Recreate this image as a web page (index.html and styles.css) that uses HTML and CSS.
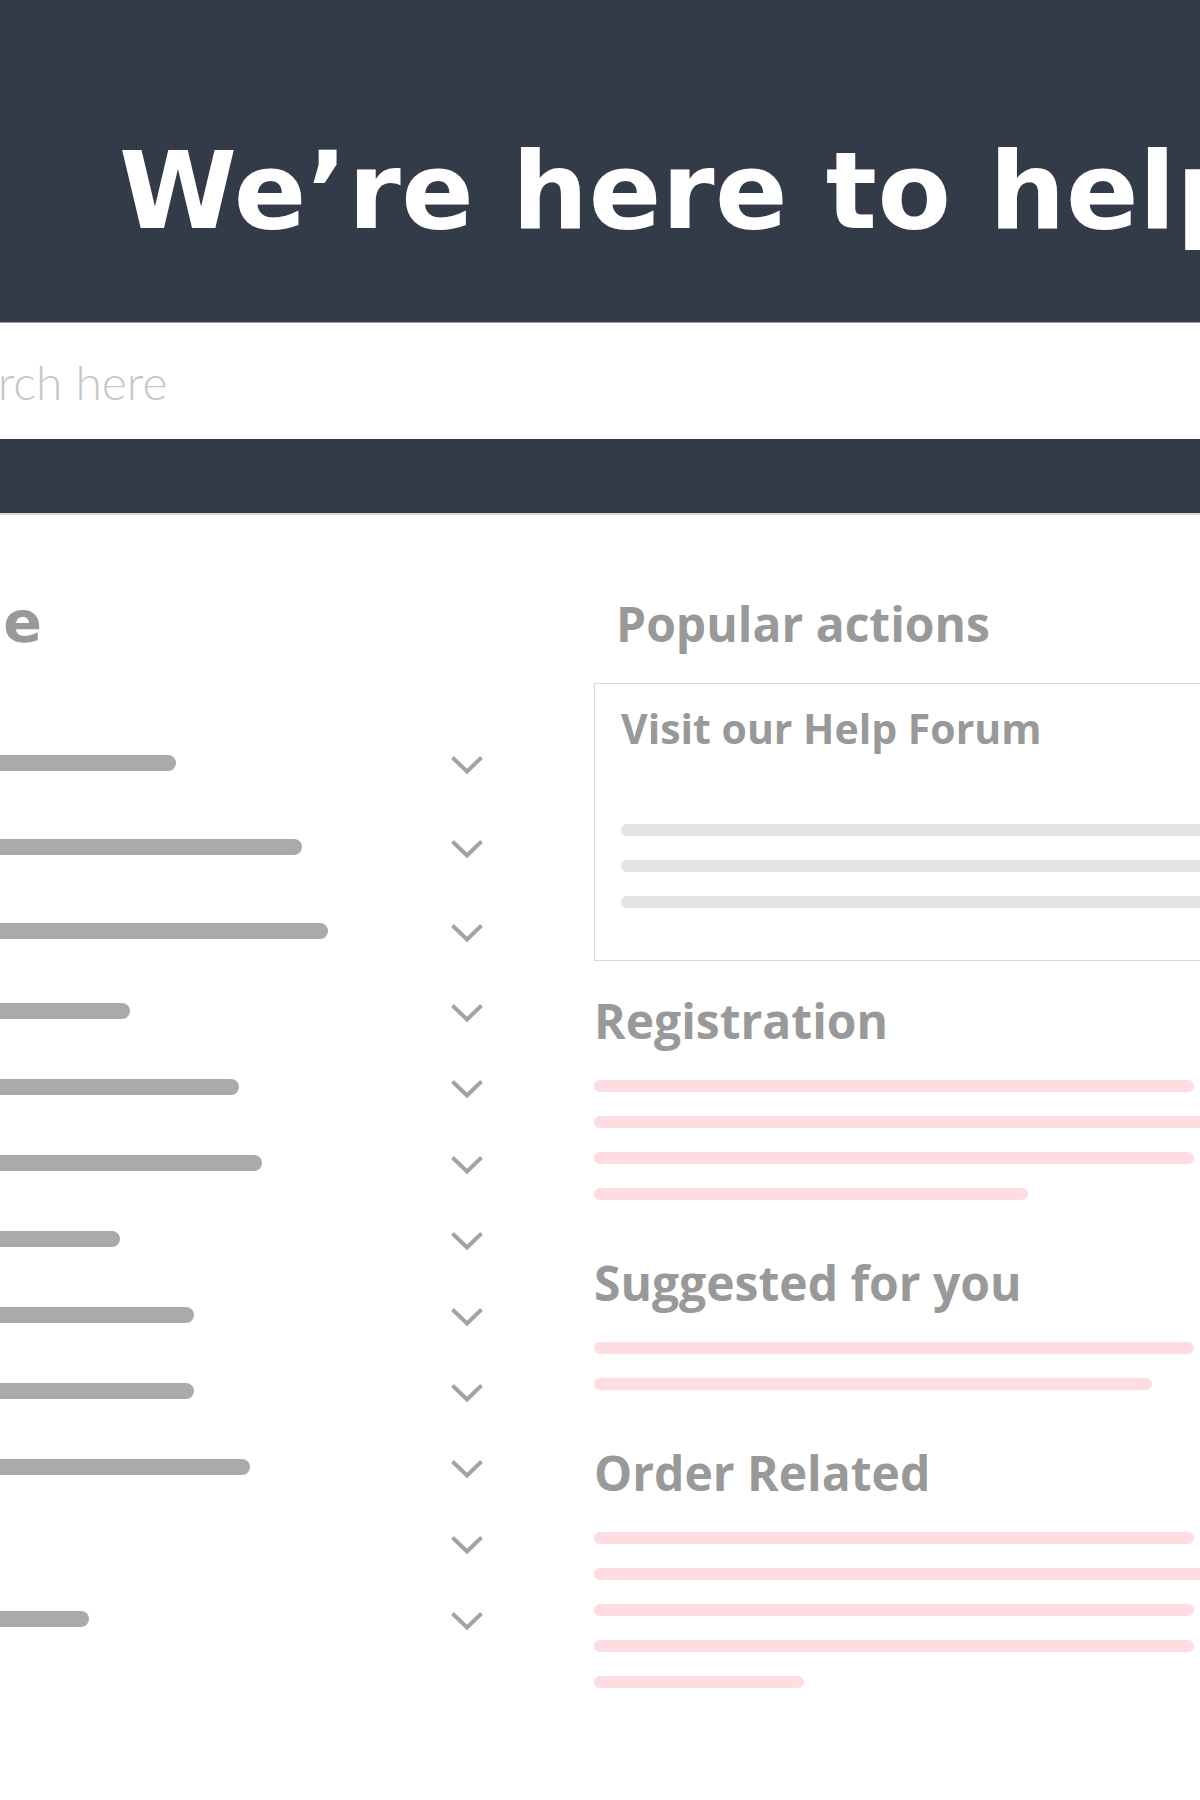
FILE: index.html
```html
<!DOCTYPE html>
<html lang="en">
<head>
  <meta charset="UTF-8" />
  <title>Help Centre</title>
  <link rel="stylesheet" href="styles.css">
</head>
<body>

<!-- top banner -->
<header class="hero">
  <h1>We’re here to help</h1>
</header>

<div class="search">
  <input type="text" class="searchInput" placeholder="Search here" />
</div>
<div class="heroStrip"></div>

<main class="content">

  <!-- topic list (accordion rows) -->
  <section class="topics">
    <h2 class="topicsTitle">Help Centre</h2>
    <ul class="topicList">
      <li class="topic"><span class="topicBar" style="width: 676px"></span><svg class="chevron" viewBox="0 0 32 18"><polyline points="1.5,1.5 16,15.5 30.5,1.5" /></svg></li>
      <li class="topic"><span class="topicBar" style="width: 802px"></span><svg class="chevron" viewBox="0 0 32 18"><polyline points="1.5,1.5 16,15.5 30.5,1.5" /></svg></li>
      <li class="topic"><span class="topicBar" style="width: 828px"></span><svg class="chevron" viewBox="0 0 32 18"><polyline points="1.5,1.5 16,15.5 30.5,1.5" /></svg></li>
      <li class="topic"><span class="topicBar" style="width: 630px"></span><svg class="chevron" viewBox="0 0 32 18"><polyline points="1.5,1.5 16,15.5 30.5,1.5" /></svg></li>
      <li class="topic"><span class="topicBar" style="width: 739px"></span><svg class="chevron" viewBox="0 0 32 18"><polyline points="1.5,1.5 16,15.5 30.5,1.5" /></svg></li>
      <li class="topic"><span class="topicBar" style="width: 762px"></span><svg class="chevron" viewBox="0 0 32 18"><polyline points="1.5,1.5 16,15.5 30.5,1.5" /></svg></li>
      <li class="topic"><span class="topicBar" style="width: 620px"></span><svg class="chevron" viewBox="0 0 32 18"><polyline points="1.5,1.5 16,15.5 30.5,1.5" /></svg></li>
      <li class="topic"><span class="topicBar" style="width: 694px"></span><svg class="chevron" viewBox="0 0 32 18"><polyline points="1.5,1.5 16,15.5 30.5,1.5" /></svg></li>
      <li class="topic"><span class="topicBar" style="width: 694px"></span><svg class="chevron" viewBox="0 0 32 18"><polyline points="1.5,1.5 16,15.5 30.5,1.5" /></svg></li>
      <li class="topic"><span class="topicBar" style="width: 750px"></span><svg class="chevron" viewBox="0 0 32 18"><polyline points="1.5,1.5 16,15.5 30.5,1.5" /></svg></li>
      <li class="topic"><span class="topicBar empty"></span><svg class="chevron" viewBox="0 0 32 18"><polyline points="1.5,1.5 16,15.5 30.5,1.5" /></svg></li>
      <li class="topic"><span class="topicBar" style="width: 589px"></span><svg class="chevron" viewBox="0 0 32 18"><polyline points="1.5,1.5 16,15.5 30.5,1.5" /></svg></li>
    </ul>
  </section>

  <!-- right column -->
  <aside class="side">
    <h2 class="sideTitle popular">Popular actions</h2>

    <div class="card">
      <h3 class="cardTitle">Visit our Help Forum</h3>
      <div class="cardLines">
        <span class="line grey"></span>
        <span class="line grey"></span>
        <span class="line grey"></span>
      </div>
    </div>

    <div class="group">
      <h2 class="sideTitle">Registration</h2>
      <div class="lines">
        <span class="line pink" style="width: 600px"></span>
        <span class="line pink" style="width: 640px"></span>
        <span class="line pink" style="width: 600px"></span>
        <span class="line pink" style="width: 434px"></span>
      </div>
    </div>

    <div class="group">
      <h2 class="sideTitle">Suggested for you</h2>
      <div class="lines">
        <span class="line pink" style="width: 600px"></span>
        <span class="line pink" style="width: 558px"></span>
      </div>
    </div>

    <div class="group">
      <h2 class="sideTitle">Order Related</h2>
      <div class="lines">
        <span class="line pink" style="width: 600px"></span>
        <span class="line pink" style="width: 640px"></span>
        <span class="line pink" style="width: 600px"></span>
        <span class="line pink" style="width: 600px"></span>
        <span class="line pink" style="width: 210px"></span>
      </div>
    </div>
  </aside>

</main>

</body>
</html>
```

FILE: styles.css
```css
html, body {
  margin: 0;
  padding: 0;
  width: 1200px;
  overflow: hidden;
  background: #fff;
  font-family: "Open Sans", "Liberation Sans", sans-serif;
}

/* ---------- banner ---------- */

.hero {
  height: 322px;
  box-sizing: border-box;
  padding: 138px 0 0 119px;
  background: #333a48;
  white-space: nowrap;
}

.hero h1 {
  margin: 0;
  font-family: "DejaVu Sans", sans-serif;
  font-weight: 700;
  font-size: 107px;
  line-height: 1;
  color: #fff;
  letter-spacing: 0.5px;
}

.search {
  height: 117px;
  border-top: 1px solid #9aa0a8;
  box-sizing: border-box;
  background: #fff;
  overflow: hidden;
}

.searchInput {
  display: block;
  margin-left: -76px;
  width: calc(100% + 76px);
  height: 116px;
  padding: 0;
  border: none;
  outline: none;
  font-family: "Lato", sans-serif;
  font-weight: 300;
  font-size: 48px;
  color: #555;
  background: transparent;
}

.searchInput::placeholder {
  color: #c6c6c6;
}

.heroStrip {
  height: 74px;
  background: #333a48;
  border-bottom: 2px solid #d4d7dc;
}

/* ---------- main ---------- */

.content {
  display: flex;
  margin-left: -500px;
  gap: 111px;
}

.topics {
  width: 983px;
  flex-shrink: 0;
}

/* only the last letter of this title shows at the page edge */
.topicsTitle {
  margin: 79px 0 0 0;
  padding-right: 431px;
  text-align: right;
  white-space: nowrap;
  font-family: "DejaVu Sans", sans-serif;
  font-weight: 700;
  font-size: 57px;
  line-height: 1;
  letter-spacing: 10px;
  color: #999;
}

.topicList {
  list-style: none;
  margin: 0;
  padding: 0;
  margin-top: 70px;
}

.topic {
  display: flex;
  align-items: center;
  justify-content: space-between;
  height: 76px;
}

.topic:nth-child(-n+3) {
  height: 84px;
}

.topicBar {
  display: block;
  height: 16px;
  border-radius: 8px;
  background: #aaa;
}

.topicBar.empty {
  width: 0;
}

.chevron {
  width: 32px;
  height: 18px;
  margin-top: 4px;
  fill: none;
  stroke: #a3a3a3;
  stroke-width: 4;
}

.side {
  width: 660px;
  flex-shrink: 0;
}

.sideTitle {
  margin: 0;
  font-weight: 700;
  font-size: 48px;
  line-height: 1;
  color: #999;
}

.sideTitle.popular {
  margin-top: 85px;
  padding-left: 22px;
}

.card {
  margin-top: 35px;
  height: 278px;
  box-sizing: border-box;
  padding: 24px 0 0 26px;
  border: 1.5px solid #dadada;
}

.cardTitle {
  margin: 0;
  font-weight: 700;
  font-size: 41px;
  line-height: 1;
  color: #999;
}

.cardLines {
  margin-top: 75px;
  display: flex;
  flex-direction: column;
  gap: 24px;
}

.line {
  display: block;
  height: 12px;
  border-radius: 6px;
}

.line.grey {
  background: #e3e3e3;
}

.line.pink {
  background: #fddde1;
}

.group {
  margin-top: 59px;
}

.card + .group {
  margin-top: 36px;
}

.lines {
  margin-top: 35px;
  display: flex;
  flex-direction: column;
  gap: 24px;
}
```
